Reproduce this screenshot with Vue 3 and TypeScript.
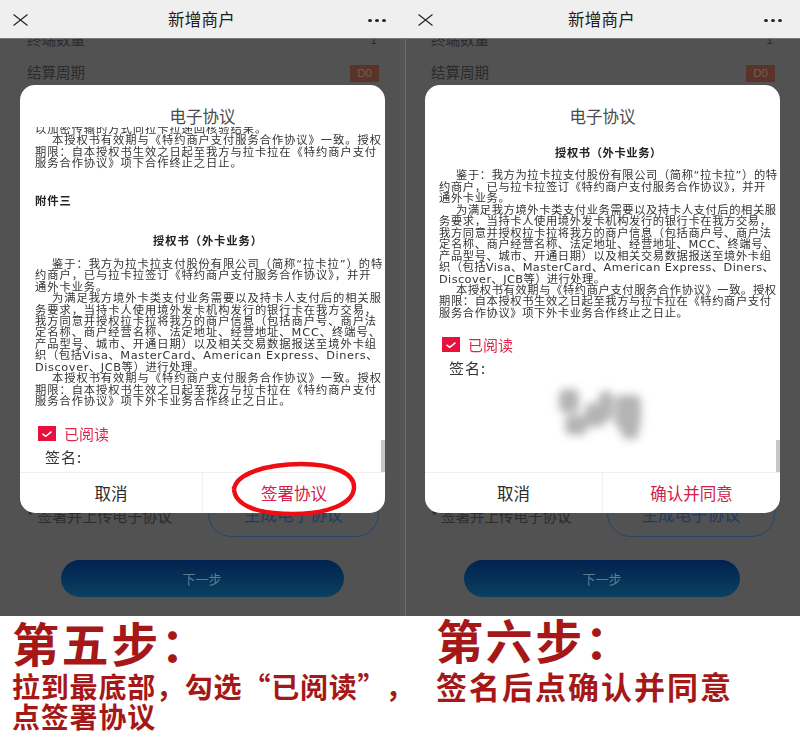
<script setup lang="ts">
interface Line { t: string; ind?: boolean; latin?: boolean }

const authLines: Line[] = [
  { t: '鉴于：我方为拉卡拉支付股份有限公司（简称“拉卡拉”）的特', ind: true },
  { t: '约商户，已与拉卡拉签订《特约商户支付服务合作协议》，并开' },
  { t: '通外卡业务。' },
  { t: '为满足我方境外卡类支付业务需要以及持卡人支付后的相关服', ind: true },
  { t: '务要求，当持卡人使用境外发卡机构发行的银行卡在我方交易，' },
  { t: '我方同意并授权拉卡拉将我方的商户信息（包括商户号、商户法' },
  { t: '定名称、商户经营名称、法定地址、经营地址、MCC、终端号、' },
  { t: '产品型号、城市、开通日期）以及相关交易数据报送至境外卡组' },
  { t: '织（包括Visa、MasterCard、American Express、Diners、', latin: true },
  { t: 'Discover、JCB等）进行处理。', latin: true },
  { t: '本授权书有效期与《特约商户支付服务合作协议》一致。授权', ind: true },
  { t: '期限：自本授权书生效之日起至我方与拉卡拉在《特约商户支付' },
  { t: '服务合作协议》项下外卡业务合作终止之日止。' },
]

const topLines: Line[] = [
  { t: '以加密传输的方式向拉卡拉递回核验结果。' },
  { t: '本授权书有效期与《特约商户支付服务合作协议》一致。授权', ind: true },
  { t: '期限：自本授权书生效之日起至我方与拉卡拉在《特约商户支付' },
  { t: '服务合作协议》项下合作终止之日止。' },
]

const panels = [
  { id: 'five', leading: true, confirm: '签署协议', signed: false },
  { id: 'six', leading: false, confirm: '确认并同意', signed: true },
]

const blots = [
  { x: 4, y: 2, w: 20, h: 24 }, { x: 10, y: 28, w: 22, h: 20 }, { x: 30, y: 16, w: 20, h: 24 },
  { x: 44, y: 4, w: 14, h: 30 }, { x: 60, y: 8, w: 26, h: 34 }, { x: 66, y: 36, w: 18, h: 16 },
]
const px = (b: { x: number; y: number; w: number; h: number }) => ({
  left: b.x + 'px', top: b.y + 'px', width: b.w + 'px', height: b.h + 'px',
})
</script>

<template>
  <div class="page">
    <div class="phones">
      <section v-for="p in panels" :key="p.id" class="phone" :class="p.id">
        <header class="bar">
          <svg class="close" viewBox="0 0 15 12" width="15" height="12" preserveAspectRatio="none">
            <path d="M0.5 0.5 L14.5 11.5 M14.5 0.5 L0.5 11.5" stroke="#222" stroke-width="1.1" fill="none" />
          </svg>
          <h1 class="bar-title">新增商户</h1>
          <div class="dots"><i></i><i></i><i></i></div>
        </header>

        <div class="back">
          <div class="back-row cut"><span>终端数量</span><span class="tick">1</span></div>
          <div class="back-row settle"><span class="settle-text">结算周期</span><span class="badge">D0</span></div>
          <div class="spacer"></div>
          <div class="back-row sign">
            <span class="sign-text">* 签署并上传电子协议</span>
            <span class="gen">生成电子协议</span>
          </div>
          <div class="next">下一步</div>
        </div>

        <div class="modal">
          <h2 class="modal-title">电子协议</h2>
          <div class="scroll">
            <div class="doc">
              <template v-if="p.leading">
                <p v-for="l in topLines" :key="l.t" class="line" :class="{ ind: l.ind }">{{ l.t }}</p>
                <p class="line annex">附件三</p>
              </template>
              <p class="line auth">授权书（外卡业务）</p>
              <p v-for="l in authLines" :key="l.t" class="line" :class="{ ind: l.ind, latin: l.latin }">{{ l.t }}</p>
              <div class="check">
                <span class="box">
                  <svg viewBox="0 0 18 15" width="18" height="15">
                    <path d="M4.5 7.8 L7.8 10.4 L13.5 5.6" stroke="#fff" stroke-width="1.5" fill="none" />
                  </svg>
                </span>
                <span class="read">已阅读</span>
              </div>
              <div class="sig">签名:</div>
              <div v-if="p.signed" class="blur">
                <i v-for="(b, i) in blots" :key="i" :style="px(b)"></i>
              </div>
            </div>
            <div class="thumb"></div>
          </div>
          <footer class="foot">
            <button class="btn cancel" type="button">取消</button>
            <button class="btn ok" type="button">{{ p.confirm }}</button>
          </footer>
          <svg v-if="!p.signed" class="ring" viewBox="0 0 130 56" width="130" height="56">
            <path d="M5 29 C6 12 40 3 72 3 C104 3 126 12 125 27 C124 43 98 53 64 53 C30 53 4 45 5 26" fill="none" stroke="#ee0d12" stroke-width="4.4" />
          </svg>
        </div>
      </section>
    </div>

    <div class="caps">
      <div class="cap cap-five">
        <div class="big">第五步：</div>
        <div class="small">拉到最底部，勾选“已阅读<span class="q">”</span>，</div>
        <div class="small">点签署协议</div>
      </div>
      <div class="cap cap-six">
        <div class="big">第六步：</div>
        <div class="mid">签名后点确认并同意</div>
      </div>
    </div>
  </div>
</template>

<style scoped>
.page {
  width: 800px;
  height: 750px;
  background: #fff;
  overflow: hidden;
  font-family: "Noto Sans CJK SC", "Noto Sans", sans-serif;
}
.phones {
  display: flex;
  height: 616px;
  background: #565656;
}
.phone {
  position: relative;
  display: flex;
  flex-direction: column;
  background: #525252;
}
.five { width: 400px; }
.six { width: 395px; margin-left: 5px; flex: none; box-shadow: inset 1px 0 0 #666c78; }
.bar {
  height: 39px;
  flex: none;
  background: #efefef;
  display: flex;
  align-items: center;
  justify-content: center;
  padding-left: 3px;
  position: relative;
  z-index: 2;
  border-bottom: 1px solid #777;
  box-sizing: border-box;
}
.six .bar { margin-left: -5px; }
.bar-title {
  margin: 0;
  font-size: 16.5px;
  font-weight: 400;
  color: #1c1c1c;
  letter-spacing: 0.2px;
}
.close { position: absolute; left: 13px; top: 14px; }
.six .close { left: 18px; }
.dots { position: absolute; right: 14px; top: 19px; display: flex; gap: 3px; }
.six .dots { right: 18px; }
.dots i { width: 4px; height: 3px; border-radius: 50%; background: #222; }

.back {
  flex: 1;
  display: flex;
  flex-direction: column;
  padding: 0 21px 19px 27px;
  color: #2b2b2b;
  font-size: 14.5px;
}
.six .back { padding: 0 25px 19px 26px; }
.back-row { display: flex; align-items: center; justify-content: space-between; }
.cut { height: 8px; overflow: hidden; line-height: 8px; }
.cut span { position: relative; top: -4px; }
.tick { margin-right: 2px; font-size: 12px; }
.settle { margin-top: 13px; height: 26px; }
.settle-text { line-height: 20px; margin-top: -2px; }
.badge {
  width: 29px;
  height: 17px;
  background: #5a3428;
  color: #7a5a50;
  font-size: 11.5px;
  line-height: 17px;
  text-align: center;
  font-family: "Liberation Sans", sans-serif;
}
.spacer { flex: 1; }
.sign { height: 47px; margin-bottom: 23px; color: #2c2c2c; }
.sign-text { font-size: 15px; line-height: 20px; margin-top: 4px; }
.six .sign-text { font-size: 14.5px; }
.gen {
  width: 171px;
  height: 47px;
  box-sizing: border-box;
  border: 1px solid #23466a;
  border-radius: 24px;
  display: flex;
  align-items: center;
  justify-content: center;
  color: #1e3c62;
  font-size: 16.5px;
}
.six .gen { width: 168px; }
.next {
  align-self: center;
  width: 283px;
  height: 37px;
  border-radius: 19px;
  background: linear-gradient(#01214f, #0b415f);
  color: #5d7c8d;
  font-size: 13px;
  display: flex;
  align-items: center;
  justify-content: center;
  margin-left: -2px;
}
.six .next { width: 276px; }

.modal {
  position: absolute;
  left: 20px;
  top: 85px;
  width: 365px;
  height: 428px;
  background: #fff;
  border-radius: 15px;
  z-index: 1;
  display: flex;
  flex-direction: column;
}
.six .modal { width: 355px; }
.modal-title {
  margin: 0;
  height: 42px;
  flex: none;
  box-sizing: border-box;
  padding-top: 20px;
  font-size: 16.5px;
  line-height: 22px;
  font-weight: 400;
  color: #4a4a4a;
  text-align: center;
}
.scroll {
  flex: 1;
  min-height: 0;
  position: relative;
  overflow: hidden;
}
.doc { padding-left: 15px; margin-top: -3px; filter: blur(0.35px); }
.six .doc { padding-left: 14px; }
.line {
  margin: 0;
  font-family: "DejaVu Sans", "Noto Sans CJK SC", sans-serif;
  font-size: 11.3px;
  letter-spacing: 0.92px;
  line-height: 11.45px;
  color: #333;
  white-space: nowrap;
}
.six .line { letter-spacing: 0.58px; }
.ind { padding-left: 17px; }
.latin { letter-spacing: 0.6px; }
.six .line.latin { letter-spacing: 0.42px; }
.annex { font-weight: 700; margin-top: 26px; color: #222; }
.auth { font-weight: 700; text-align: center; padding-right: 4px; margin: 29px 0 11px; color: #222; }
.six .auth { margin: 24px 0 11px; padding-right: 2px; }
.check { display: flex; align-items: center; margin: 18px 0 0 3px; height: 15px; }
.box { width: 18px; height: 15px; background: #e8103c; display: block; flex: none; }
.box svg { display: block; }
.read { margin-left: 8px; font-size: 15px; color: #e0254c; line-height: 15px; }
.sig { margin: 8px 0 0 10px; font-size: 15px; line-height: 16px; color: #333; letter-spacing: 1px; }
.blur { position: relative; width: 96px; height: 58px; margin: 11px 0 0 116px; filter: blur(4px); }
.blur i { position: absolute; background: #b4b4b4; border-radius: 6px; }
.thumb {
  position: absolute;
  right: 0;
  bottom: 0;
  width: 4px;
  height: 32px;
  background: #c6c6c6;
}
.foot {
  height: 40px;
  flex: none;
  display: flex;
  border-top: 1px solid #f0f0f0;
}
.btn {
  flex: 1;
  border: 0;
  padding: 0;
  background: none;
  font-family: inherit;
  font-size: 16.5px;
  line-height: 36px;
}
.cancel { color: #2a2a2a; border-right: 1px solid #f0f0f0; }
.ok { color: #d2204a; }
.ring { position: absolute; right: 26px; bottom: -4px; pointer-events: none; }

.caps { display: flex; height: 134px; color: #a61818; font-weight: 700; }
.cap-five { width: 400px; padding-left: 12px; box-sizing: border-box; }
.cap-six { padding-left: 36px; }
.big { font-size: 47px; line-height: 58px; letter-spacing: 2.6px; margin-top: -3px; }
.small { font-size: 28px; line-height: 29px; letter-spacing: 0.8px; white-space: nowrap; margin-top: 1px; }
.q { margin-right: 13px; }
.mid { font-size: 31px; line-height: 36px; letter-spacing: 2px; white-space: nowrap; }
.cap-six .big { margin-top: -6px; }
</style>
